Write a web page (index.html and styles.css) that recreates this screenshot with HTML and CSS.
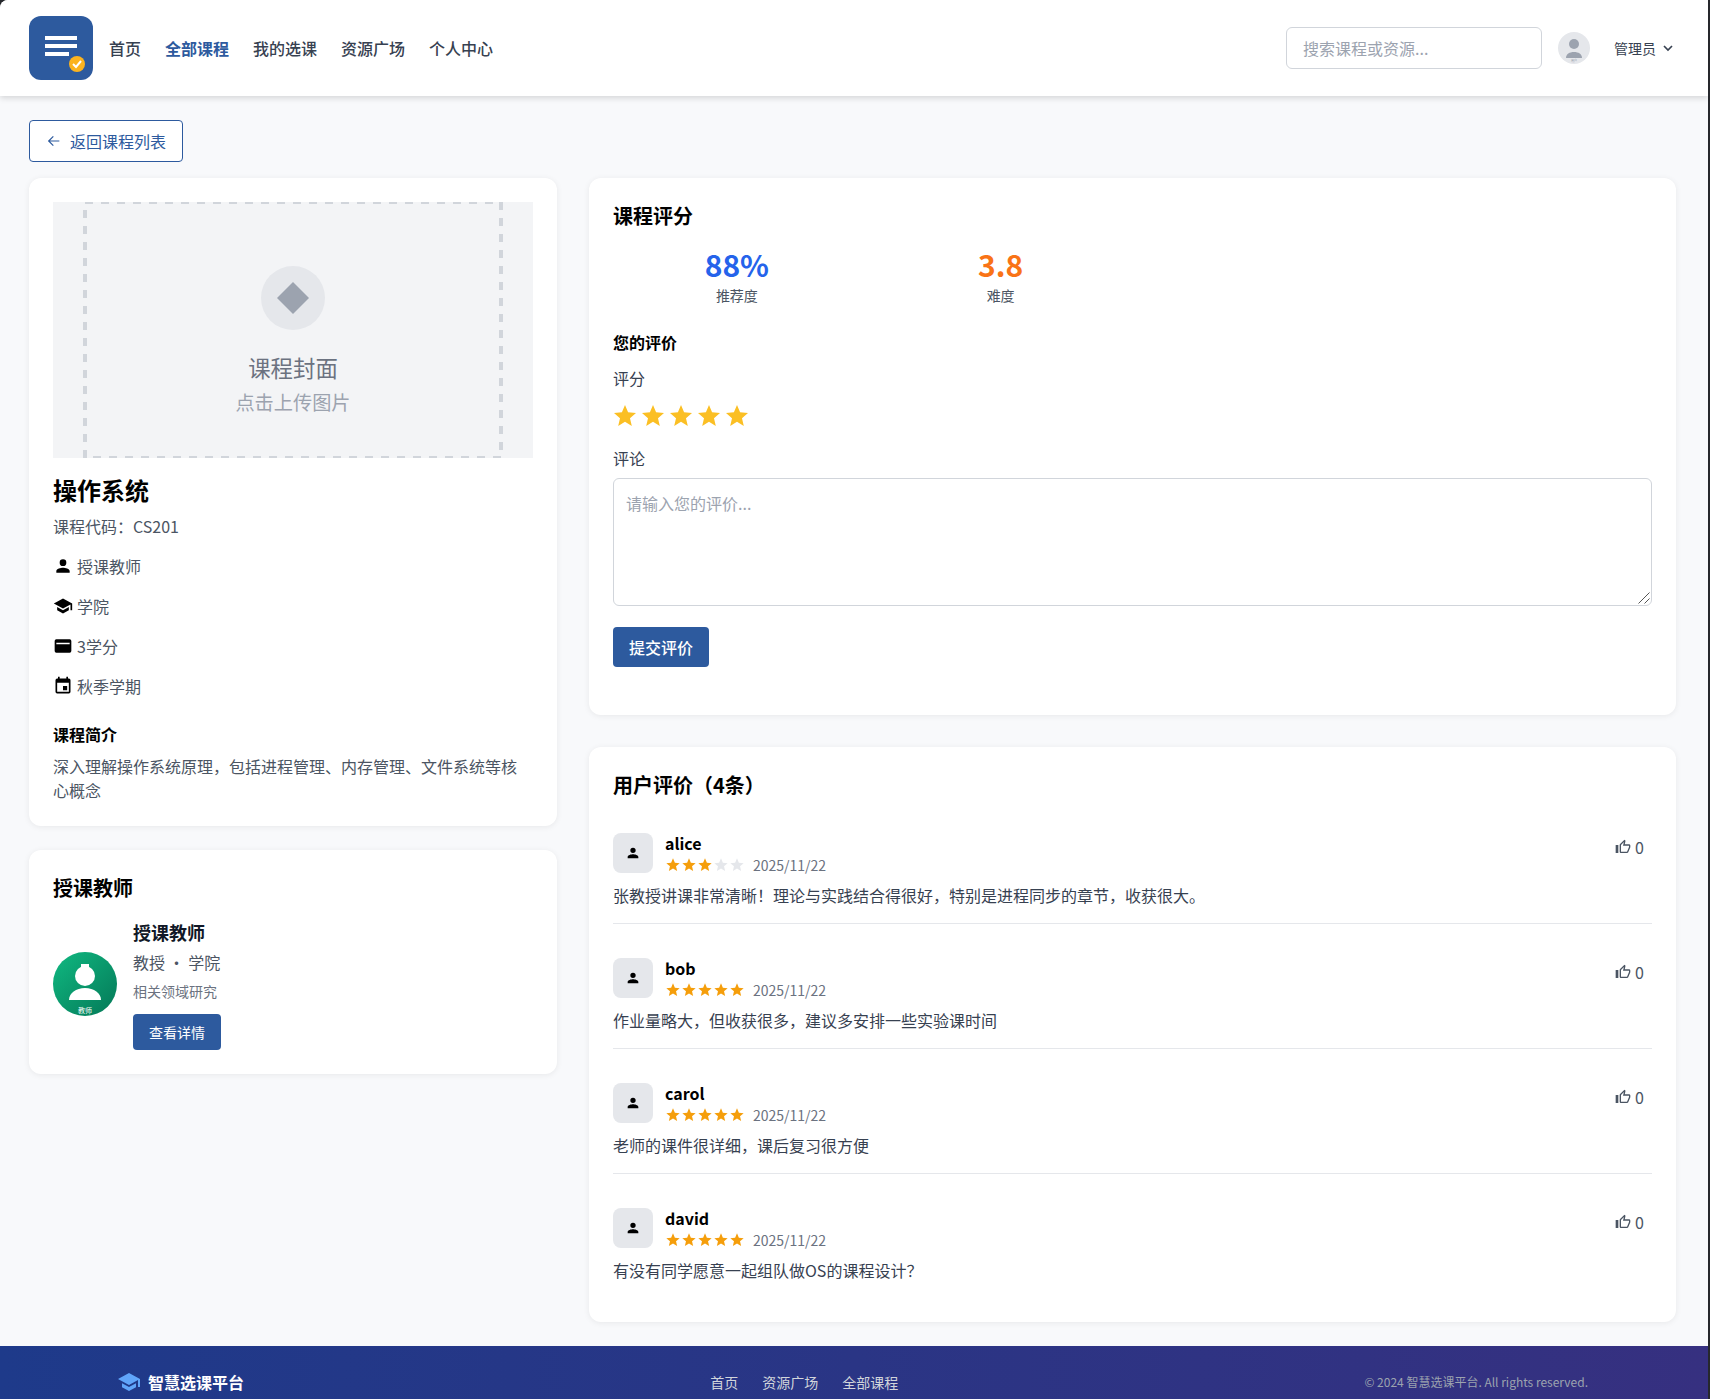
FILE: index.html
```html
<!DOCTYPE html>
<html lang="zh-CN">
<head>
    <meta charset="UTF-8">
    <title>操作系统 - 智慧选课平台</title>
    <link rel="stylesheet" href="styles.css">
</head>
<body>
    <div class="page">
        <header class="top-bar">
            <div class="logo">
                <svg width="64" height="64" viewBox="0 0 64 64">
                    <rect width="64" height="64" rx="12" fill="#2d5a9e"/>
                    <rect x="16" y="20" width="32" height="4" fill="#fff"/>
                    <rect x="16" y="28" width="32" height="4" fill="#fff"/>
                    <rect x="16" y="36" width="24" height="4" fill="#fff"/>
                    <circle cx="48" cy="48" r="8" fill="#fbb31f"/>
                    <path d="M44 48l3 3 5-6" fill="none" stroke="#fff" stroke-width="2"/>
                </svg>
            </div>
            <nav class="main-nav">
                <a href="#">首页</a>
                <a href="#" class="active">全部课程</a>
                <a href="#">我的选课</a>
                <a href="#">资源广场</a>
                <a href="#">个人中心</a>
            </nav>
            <div class="top-right">
                <input class="search-box" type="text" placeholder="搜索课程或资源...">
                <svg class="user-pic" width="32" height="32" viewBox="0 0 32 32">
                    <circle cx="16" cy="16" r="16" fill="#e5e7eb"/>
                    <circle cx="16" cy="12" r="5" fill="#9ca3af"/>
                    <path d="M8 26c0-4 3.500-6 8-6s8 2 8 6z" fill="#9ca3af"/>
                    <text x="16" y="30" text-anchor="middle" font-size="3" fill="#9ca3af">用户</text>
                </svg>
                <span class="user-name">管理员</span>
                <svg class="chevron" width="16" height="16" viewBox="0 0 24 24">
                    <path d="M6 9l6 6 6-6" fill="none" stroke="#374151" stroke-width="2.500"/>
                </svg>
            </div>
        </header>

        <main class="content">
            <a href="#" class="back-btn">
                <svg width="16" height="16" viewBox="0 0 24 24">
                    <path d="M20 12H5M11 5l-7 7 7 7" fill="none" stroke="#2d5a9e" stroke-width="1.800"/>
                </svg>
                返回课程列表
            </a>

            <div class="columns">
                <div class="side">
                    <section class="card info-card">
                        <div class="cover">
                            <svg width="480" height="256" viewBox="0 0 480 256">
                                <rect x="32" y="0" width="416" height="256" fill="none" stroke="#d1d5db" stroke-width="4" stroke-dasharray="8 8"/>
                                <circle cx="240" cy="96" r="32" fill="#e5e7eb"/>
                                <polygon points="240,80 256,96 240,112 224,96" fill="#9ca3af"/>
                                <text class="cover-title" x="240" y="175" text-anchor="middle">课程封面</text>
                                <text class="cover-sub" x="240" y="208" text-anchor="middle">点击上传图片</text>
                            </svg>
                        </div>
                        <h1 class="course-name">操作系统</h1>
                        <p class="course-code">课程代码：CS201</p>
                        <ul class="meta-list">
                            <li>
                                <svg width="20" height="20" viewBox="0 0 24 24"><path d="M12 12a4 4 0 1 0 0-8 4 4 0 0 0 0 8zm0 2c-2.700 0-8 1.300-8 4v2h16v-2c0-2.700-5.300-4-8-4z"/></svg>
                                授课教师
                            </li>
                            <li>
                                <svg width="20" height="20" viewBox="0 0 24 24"><path d="M5 13.200v4L12 21l7-3.800v-4L12 17zM12 3L1 9l11 6 9-4.900V17h2V9z"/></svg>
                                学院
                            </li>
                            <li>
                                <svg width="20" height="20" viewBox="0 0 24 24"><path d="M20 4H4a2 2 0 0 0-2 2v12a2 2 0 0 0 2 2h16a2 2 0 0 0 2-2V6a2 2 0 0 0-2-2zm0 6H4V8h16z"/></svg>
                                3学分
                            </li>
                            <li>
                                <svg width="20" height="20" viewBox="0 0 24 24"><path d="M17 12h-5v5h5zM16 1v2H8V1H6v2H5a2 2 0 0 0-2 2v14a2 2 0 0 0 2 2h14a2 2 0 0 0 2-2V5a2 2 0 0 0-2-2h-1V1zm3 18H5V8h14z"/></svg>
                                秋季学期
                            </li>
                        </ul>
                        <h3 class="intro-title">课程简介</h3>
                        <p class="intro-text">深入理解操作系统原理，包括进程管理、内存管理、文件系统等核心概念</p>
                    </section>

                    <section class="card">
                        <h2 class="card-title">授课教师</h2>
                        <div class="teacher">
                            <div class="teacher-pic">
                                <svg width="64" height="64" viewBox="0 0 64 64">
                                    <defs>
                                        <linearGradient id="teacherBg" x1="0" y1="0" x2="1" y2="1">
                                            <stop offset="0" stop-color="#10b981"/>
                                            <stop offset="1" stop-color="#047857"/>
                                        </linearGradient>
                                    </defs>
                                    <circle cx="32" cy="32" r="32" fill="url(#teacherBg)"/>
                                    <circle cx="32" cy="24" r="10" fill="#fff"/>
                                    <rect x="28" y="12" width="8" height="4" fill="#fff"/>
                                    <path d="M16 48c0-6.600 7-12 16-12s16 5.400 16 12z" fill="#fff"/>
                                    <text x="32" y="60.500" text-anchor="middle" font-size="7" fill="#fff">教师</text>
                                </svg>
                            </div>
                            <div class="teacher-info">
                                <div class="teacher-name">授课教师</div>
                                <div class="teacher-title">教授 · 学院</div>
                                <div class="teacher-field">相关领域研究</div>
                                <a href="#" class="detail-btn">查看详情</a>
                            </div>
                        </div>
                    </section>
                </div>

                <div class="main-col">
                    <section class="card rating-card">
                        <h2 class="card-title">课程评分</h2>
                        <div class="score-grid">
                            <div class="score">
                                <div class="score-num blue">88%</div>
                                <div class="score-label">推荐度</div>
                            </div>
                            <div class="score">
                                <div class="score-num orange">3.8</div>
                                <div class="score-label">难度</div>
                            </div>
                        </div>
                        <h3 class="form-head">您的评价</h3>
                        <label class="field-label">评分</label>
                        <div class="big-stars">
                            <svg width="22" height="22" viewBox="2 2 20 20"><use href="#star"/></svg>
                            <svg width="22" height="22" viewBox="2 2 20 20"><use href="#star"/></svg>
                            <svg width="22" height="22" viewBox="2 2 20 20"><use href="#star"/></svg>
                            <svg width="22" height="22" viewBox="2 2 20 20"><use href="#star"/></svg>
                            <svg width="22" height="22" viewBox="2 2 20 20"><use href="#star"/></svg>
                        </div>
                        <label class="field-label comment-label">评论</label>
                        <div class="comment-wrap">
                            <textarea class="comment-box" placeholder="请输入您的评价..."></textarea>
                            <svg class="grip" width="12" height="12" viewBox="0 0 12 12">
                                <path d="M.5 11.500l11-11M6.500 11.500l5-5" fill="none" stroke="#555" stroke-width="1"/>
                            </svg>
                        </div>
                        <button class="submit-btn">提交评价</button>
                    </section>

                    <section class="card">
                        <h2 class="card-title">用户评价（4条）</h2>
                        <div class="review">
                            <div class="review-top">
                                <div class="review-pic"><svg width="16" height="16" viewBox="0 0 24 24"><use href="#person"/></svg></div>
                                <div class="review-who">
                                    <div class="review-name">alice</div>
                                    <div class="review-sub">
                                        <span class="small-stars">
                                            <svg class="on" width="16" height="16" viewBox="0 0 24 24"><use href="#star"/></svg>
                                            <svg class="on" width="16" height="16" viewBox="0 0 24 24"><use href="#star"/></svg>
                                            <svg class="on" width="16" height="16" viewBox="0 0 24 24"><use href="#star"/></svg>
                                            <svg class="off" width="16" height="16" viewBox="0 0 24 24"><use href="#star"/></svg>
                                            <svg class="off" width="16" height="16" viewBox="0 0 24 24"><use href="#star"/></svg>
                                        </span>
                                        <span class="review-date">2025/11/22</span>
                                    </div>
                                </div>
                                <div class="like"><svg width="16" height="16" viewBox="0 0 24 24"><use href="#thumb"/></svg> 0</div>
                            </div>
                            <p class="review-text">张教授讲课非常清晰！理论与实践结合得很好，特别是进程同步的章节，收获很大。</p>
                        </div>
                        <div class="review">
                            <div class="review-top">
                                <div class="review-pic"><svg width="16" height="16" viewBox="0 0 24 24"><use href="#person"/></svg></div>
                                <div class="review-who">
                                    <div class="review-name">bob</div>
                                    <div class="review-sub">
                                        <span class="small-stars">
                                            <svg class="on" width="16" height="16" viewBox="0 0 24 24"><use href="#star"/></svg>
                                            <svg class="on" width="16" height="16" viewBox="0 0 24 24"><use href="#star"/></svg>
                                            <svg class="on" width="16" height="16" viewBox="0 0 24 24"><use href="#star"/></svg>
                                            <svg class="on" width="16" height="16" viewBox="0 0 24 24"><use href="#star"/></svg>
                                            <svg class="on" width="16" height="16" viewBox="0 0 24 24"><use href="#star"/></svg>
                                        </span>
                                        <span class="review-date">2025/11/22</span>
                                    </div>
                                </div>
                                <div class="like"><svg width="16" height="16" viewBox="0 0 24 24"><use href="#thumb"/></svg> 0</div>
                            </div>
                            <p class="review-text">作业量略大，但收获很多，建议多安排一些实验课时间</p>
                        </div>
                        <div class="review">
                            <div class="review-top">
                                <div class="review-pic"><svg width="16" height="16" viewBox="0 0 24 24"><use href="#person"/></svg></div>
                                <div class="review-who">
                                    <div class="review-name">carol</div>
                                    <div class="review-sub">
                                        <span class="small-stars">
                                            <svg class="on" width="16" height="16" viewBox="0 0 24 24"><use href="#star"/></svg>
                                            <svg class="on" width="16" height="16" viewBox="0 0 24 24"><use href="#star"/></svg>
                                            <svg class="on" width="16" height="16" viewBox="0 0 24 24"><use href="#star"/></svg>
                                            <svg class="on" width="16" height="16" viewBox="0 0 24 24"><use href="#star"/></svg>
                                            <svg class="on" width="16" height="16" viewBox="0 0 24 24"><use href="#star"/></svg>
                                        </span>
                                        <span class="review-date">2025/11/22</span>
                                    </div>
                                </div>
                                <div class="like"><svg width="16" height="16" viewBox="0 0 24 24"><use href="#thumb"/></svg> 0</div>
                            </div>
                            <p class="review-text">老师的课件很详细，课后复习很方便</p>
                        </div>
                        <div class="review">
                            <div class="review-top">
                                <div class="review-pic"><svg width="16" height="16" viewBox="0 0 24 24"><use href="#person"/></svg></div>
                                <div class="review-who">
                                    <div class="review-name">david</div>
                                    <div class="review-sub">
                                        <span class="small-stars">
                                            <svg class="on" width="16" height="16" viewBox="0 0 24 24"><use href="#star"/></svg>
                                            <svg class="on" width="16" height="16" viewBox="0 0 24 24"><use href="#star"/></svg>
                                            <svg class="on" width="16" height="16" viewBox="0 0 24 24"><use href="#star"/></svg>
                                            <svg class="on" width="16" height="16" viewBox="0 0 24 24"><use href="#star"/></svg>
                                            <svg class="on" width="16" height="16" viewBox="0 0 24 24"><use href="#star"/></svg>
                                        </span>
                                        <span class="review-date">2025/11/22</span>
                                    </div>
                                </div>
                                <div class="like"><svg width="16" height="16" viewBox="0 0 24 24"><use href="#thumb"/></svg> 0</div>
                            </div>
                            <p class="review-text">有没有同学愿意一起组队做OS的课程设计？</p>
                        </div>
                    </section>
                </div>
            </div>
        </main>

        <footer class="bottom-bar">
            <div class="foot-brand">
                <svg width="24" height="24" viewBox="0 0 24 24"><path d="M5 13.200v4L12 21l7-3.800v-4L12 17zM12 3L1 9l11 6 9-4.900V17h2V9z" fill="#60a5fa"/></svg>
                智慧选课平台
            </div>
            <div class="foot-links">
                <a href="#">首页</a>
                <a href="#">资源广场</a>
                <a href="#">全部课程</a>
            </div>
            <div class="foot-copy">© 2024 智慧选课平台. All rights reserved.</div>
        </footer>
    </div>

    <svg class="icon-defs" width="0" height="0">
        <defs>
            <path id="star" d="M12 17.270L18.180 21l-1.640-7.030L22 9.240l-7.190-.61L12 2 9.190 8.630 2 9.240l5.460 4.730L5.820 21z"/>
            <path id="person" d="M12 12a4 4 0 1 0 0-8 4 4 0 0 0 0 8zm0 2c-2.700 0-8 1.300-8 4v2h16v-2c0-2.700-5.300-4-8-4z"/>
            <path id="thumb" d="M9 21h9c.83 0 1.540-.5 1.840-1.220l3.020-7.050c.09-.23.14-.47.14-.73v-2c0-1.100-.9-2-2-2h-6.310l.95-4.570.03-.32c0-.41-.17-.79-.44-1.060L14.170 1 7.580 7.590C7.220 7.950 7 8.450 7 9v10c0 1.100.9 2 2 2zM9 9l4.340-4.340L12 10h9v2l-3 7H9V9zM1 9h4v12H1z"/>
        </defs>
    </svg>
</body>
</html>
```

FILE: styles.css
```css
* {
    box-sizing: border-box;
}
html, body {
    margin: 0;
    height: 100%;
    overflow: hidden;
    background: #26282c;
}
body {
    font-family: "Noto Sans CJK SC", "Noto Sans", sans-serif;
    font-size: 16px;
    line-height: 24px;
    color: #1f2937;
}
a {
    text-decoration: none;
    color: inherit;
}
h1, h2, h3, p, ul {
    margin: 0;
    padding: 0;
}
.icon-defs {
    position: absolute;
}
.page {
    width: 1708px;
    min-height: 1399px;
    background: #f8f9fb;
    border-top-left-radius: 8px;
    overflow: hidden;
}

/* top bar */
.top-bar {
    height: 96px;
    background: #fff;
    display: flex;
    align-items: center;
    padding: 0 32px 0 29px;
    box-shadow: 0 2px 6px rgba(0, 0, 0, 0.15);
}
.logo {
    height: 64px;
    margin-right: 16px;
}
.main-nav {
    display: flex;
    gap: 24px;
}
.main-nav a {
    color: #374151;
    font-weight: 500;
}
.main-nav a.active {
    color: #2d5a9e;
    font-weight: 700;
}
.top-right {
    margin-left: auto;
    display: flex;
    align-items: center;
}
.search-box {
    width: 256px;
    height: 42px;
    padding: 0 16px;
    border: 1px solid #d1d5db;
    border-radius: 6px;
    font: 16px "Noto Sans CJK SC", sans-serif;
    margin-right: 16px;
}
.search-box::placeholder, .comment-box::placeholder {
    color: #9ca3af;
}
.user-name {
    font-size: 14px;
    margin-left: 24px;
    color: #374151;
}
.chevron {
    margin-left: 4px;
}

/* content */
.content {
    padding: 24px 32px 24px 29px;
}
.back-btn {
    display: inline-flex;
    align-items: center;
    gap: 8px;
    height: 42px;
    padding: 0 16px;
    background: #fff;
    border: 1px solid #2d5a9e;
    border-radius: 4px;
    color: #2d5a9e;
}
.columns {
    display: grid;
    grid-template-columns: 528px 1087px;
    gap: 32px;
    margin-top: 16px;
    align-items: start;
}
.side {
    display: flex;
    flex-direction: column;
    gap: 24px;
}
.main-col {
    display: flex;
    flex-direction: column;
    gap: 32px;
}
.card {
    background: #fff;
    border-radius: 12px;
    padding: 24px;
    box-shadow: 0 1px 6px rgba(0, 0, 0, 0.07);
}
.card-title {
    font-size: 20px;
    line-height: 28px;
    font-weight: 700;
    color: #000;
}

/* cover */
.cover {
    height: 256px;
    background: #f3f4f6;
}
.cover svg {
    display: block;
}
.cover-title {
    font-size: 22.400px;
    fill: #6b7280;
}
.cover-sub {
    font-size: 19.200px;
    fill: #9ca3af;
}
.course-name {
    font-size: 24px;
    line-height: 32px;
    font-weight: 700;
    color: #000;
    margin-top: 16px;
}
.course-code {
    margin-top: 8px;
    color: #4b5563;
}
.meta-list {
    list-style: none;
    margin-top: 16px;
}
.meta-list li {
    display: flex;
    align-items: center;
    gap: 4px;
    height: 24px;
    margin-bottom: 16px;
    color: #4b5563;
}
.meta-list svg {
    flex: none;
}
.intro-title {
    font-size: 16px;
    font-weight: 700;
    color: #000;
    margin-top: 24px;
}
.intro-text {
    margin-top: 8px;
    padding-right: 2px;
    color: #4b5563;
}

/* teacher */
.teacher {
    display: flex;
    align-items: center;
    gap: 16px;
    margin-top: 16px;
}
.teacher-pic {
    height: 64px;
}
.teacher-name {
    font-size: 18px;
    line-height: 28px;
    font-weight: 700;
    color: #111827;
}
.teacher-title {
    color: #4b5563;
    margin-top: 4px;
}
.teacher-field {
    font-size: 14px;
    line-height: 20px;
    color: #6b7280;
    margin-top: 7px;
}
.detail-btn {
    display: inline-block;
    width: 88px;
    height: 36px;
    line-height: 36px;
    text-align: center;
    margin-top: 13px;
    background: #2d5a9e;
    color: #fff;
    font-size: 14px;
    border-radius: 4px;
}

/* rating */
.rating-card {
    padding-bottom: 48px;
}
.score-grid {
    display: grid;
    grid-template-columns: repeat(4, 1fr);
    gap: 16px;
    margin-top: 16px;
}
.score {
    text-align: center;
}
.score-num {
    font-size: 30px;
    line-height: 36px;
    font-weight: 600;
}
.score-num.blue {
    color: #2563eb;
}
.score-num.orange {
    color: #f97316;
}
.score-label {
    font-size: 14px;
    line-height: 20px;
    margin-top: 3px;
    color: #4b5563;
}
.form-head {
    font-size: 16px;
    font-weight: 700;
    color: #000;
    margin-top: 25px;
}
.field-label {
    display: block;
    margin-top: 12px;
    color: #374151;
}
.comment-label {
    margin-top: 19px;
}
.big-stars {
    display: flex;
    gap: 6px;
    height: 22px;
    margin: 15px 0 0 1px;
    fill: #fbbf24;
}
.comment-wrap {
    position: relative;
    margin-top: 8px;
}
.comment-box {
    display: block;
    width: 100%;
    height: 128px;
    padding: 12px;
    border: 1px solid #d1d5db;
    border-radius: 6px;
    resize: none;
    font: 16px/24px "Noto Sans CJK SC", sans-serif;
}
.grip {
    position: absolute;
    right: 2px;
    bottom: 2px;
    pointer-events: none;
}
.submit-btn {
    display: block;
    width: 96px;
    height: 40px;
    margin-top: 21px;
    background: #2d5a9e;
    color: #fff;
    border: none;
    border-radius: 4px;
    font: 500 16px "Noto Sans CJK SC", sans-serif;
}

/* reviews */
.review {
    padding-bottom: 16px;
    margin-top: 34px;
    border-bottom: 1px solid #e5e7eb;
}
.review:last-child {
    border-bottom: none;
}
.review-top {
    display: flex;
    align-items: flex-start;
    gap: 12px;
}
.review-pic {
    width: 40px;
    height: 40px;
    border-radius: 8px;
    background: #e5e7eb;
    display: flex;
    align-items: center;
    justify-content: center;
}
.review-name {
    font-weight: 600;
    color: #000;
    line-height: 20px;
    margin-bottom: 2px;
}
.review-sub {
    display: flex;
    align-items: center;
    gap: 8px;
    line-height: 20px;
}
.small-stars {
    display: flex;
}
.small-stars .on {
    fill: #f59e0b;
}
.small-stars .off {
    fill: #e5e7eb;
}
.review-date {
    font-size: 14px;
    color: #6b7280;
}
.like {
    margin-left: auto;
    padding: 2px 8px;
    color: #4b5563;
    display: flex;
    align-items: center;
    gap: 4px;
    fill: #4b5563;
}
.review-text {
    margin-top: 8px;
    color: #374151;
}

/* footer */
.bottom-bar {
    height: 72px;
    background: linear-gradient(90deg, #1e3a8a, #363080);
    display: flex;
    justify-content: space-between;
    align-items: center;
    padding: 0 120px 0 117px;
    color: #fff;
}
.foot-brand {
    display: flex;
    align-items: center;
    gap: 7px;
    font-weight: 700;
}
.foot-links {
    display: flex;
    gap: 24px;
    font-size: 14px;
    color: #d1d5db;
}
.foot-copy {
    font-size: 12px;
    color: #9ca3af;
}
```
